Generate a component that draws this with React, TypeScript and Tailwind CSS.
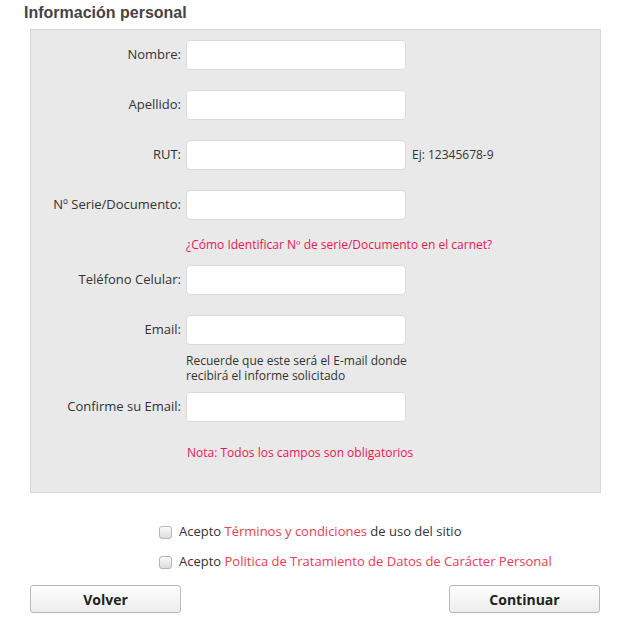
import React from "react";

const font = { fontFamily: '"Open Sans", "Liberation Sans", sans-serif' };

function Row({ label, extra }: { label: string; extra?: React.ReactNode }) {
  return (
    <div className="flex items-center">
      <label className="w-[155px] shrink-0 pr-[5px] text-right text-[13px] text-[#333]">{label}</label>
      <input
        type="text"
        className="h-[30px] w-[220px] rounded-[4px] border border-[#dadada] bg-white outline-none"
      />
      {extra}
    </div>
  );
}

function Check({ children }: { children: React.ReactNode }) {
  return (
    <label className="flex items-center h-[18px] text-[13px] text-[#333]">
      <span className="w-[13px] h-[13px] rounded-[3px] border border-[#b5b5b5] bg-gradient-to-b from-[#fafafa] to-[#dcdcdc]" />
      <span className="ml-[7px]">{children}</span>
    </label>
  );
}

export default function App() {
  return (
    <div className="w-[635px] h-[621px] bg-white" style={font}>
      <div className="pl-[24px] pt-[3px] h-[29px]">
        <h2
          className="text-[16px] font-bold text-[#444] leading-[20px]"
          style={{ fontFamily: '"Liberation Sans", Arial, sans-serif' }}
        >
          Información personal
        </h2>
      </div>
      <div className="ml-[30px] w-[571px] h-[464px] border border-[#d6d6d6] bg-[#e9e9e9] pt-[10px]">
        <div className="flex flex-col gap-[20px]">
          <Row label="Nombre:" />
          <Row label="Apellido:" />
          <Row
            label="RUT:"
            extra={<span className="ml-[6px] text-[12px] text-[#333]">Ej: 12345678-9</span>}
          />
          <Row label="Nº Serie/Documento:" />
        </div>
        <div className="pl-[155px] mt-[16px] mb-[11px] h-[18px] text-[12px] leading-[18px] text-[#e8174f]">
          ¿Cómo Identificar Nº de serie/Documento en el carnet?
        </div>
        <div className="flex flex-col gap-[20px]">
          <Row label="Teléfono Celular:" />
          <Row label="Email:" />
        </div>
        <div className="pl-[155px] mt-[8px] mb-[9px] w-[380px] text-[12px] leading-[15px] text-[#333]">
          Recuerde que este será el E-mail donde recibirá el informe solicitado
        </div>
        <Row label="Confirme su Email:" />
        <div className="pl-[156px] mt-[22px] h-[18px] text-[12px] leading-[18px] text-[#e8174f]">
          Nota: Todos los campos son obligatorios
        </div>
      </div>
      <div className="mt-[30px] pl-[159px] flex flex-col gap-[12px]">
        <Check>
          Acepto <span className="text-[#ec3b52]">Términos y condiciones</span> de uso del sitio
        </Check>
        <Check>
          Acepto <span className="text-[#ec3b52]">Politica de Tratamiento de Datos de Carácter Personal</span>
        </Check>
      </div>
      <div className="mt-[14px] px-[30px] w-[630px] flex justify-between">
        <button className="w-[151px] h-[28px] rounded-[3px] border border-[#b9b9b9] bg-gradient-to-b from-white to-[#ececec] text-[14px] font-bold text-[#222]">
          Volver
        </button>
        <button className="w-[151px] h-[28px] rounded-[3px] border border-[#b9b9b9] bg-gradient-to-b from-white to-[#ececec] text-[14px] font-bold text-[#222]">
          Continuar
        </button>
      </div>
    </div>
  );
}
